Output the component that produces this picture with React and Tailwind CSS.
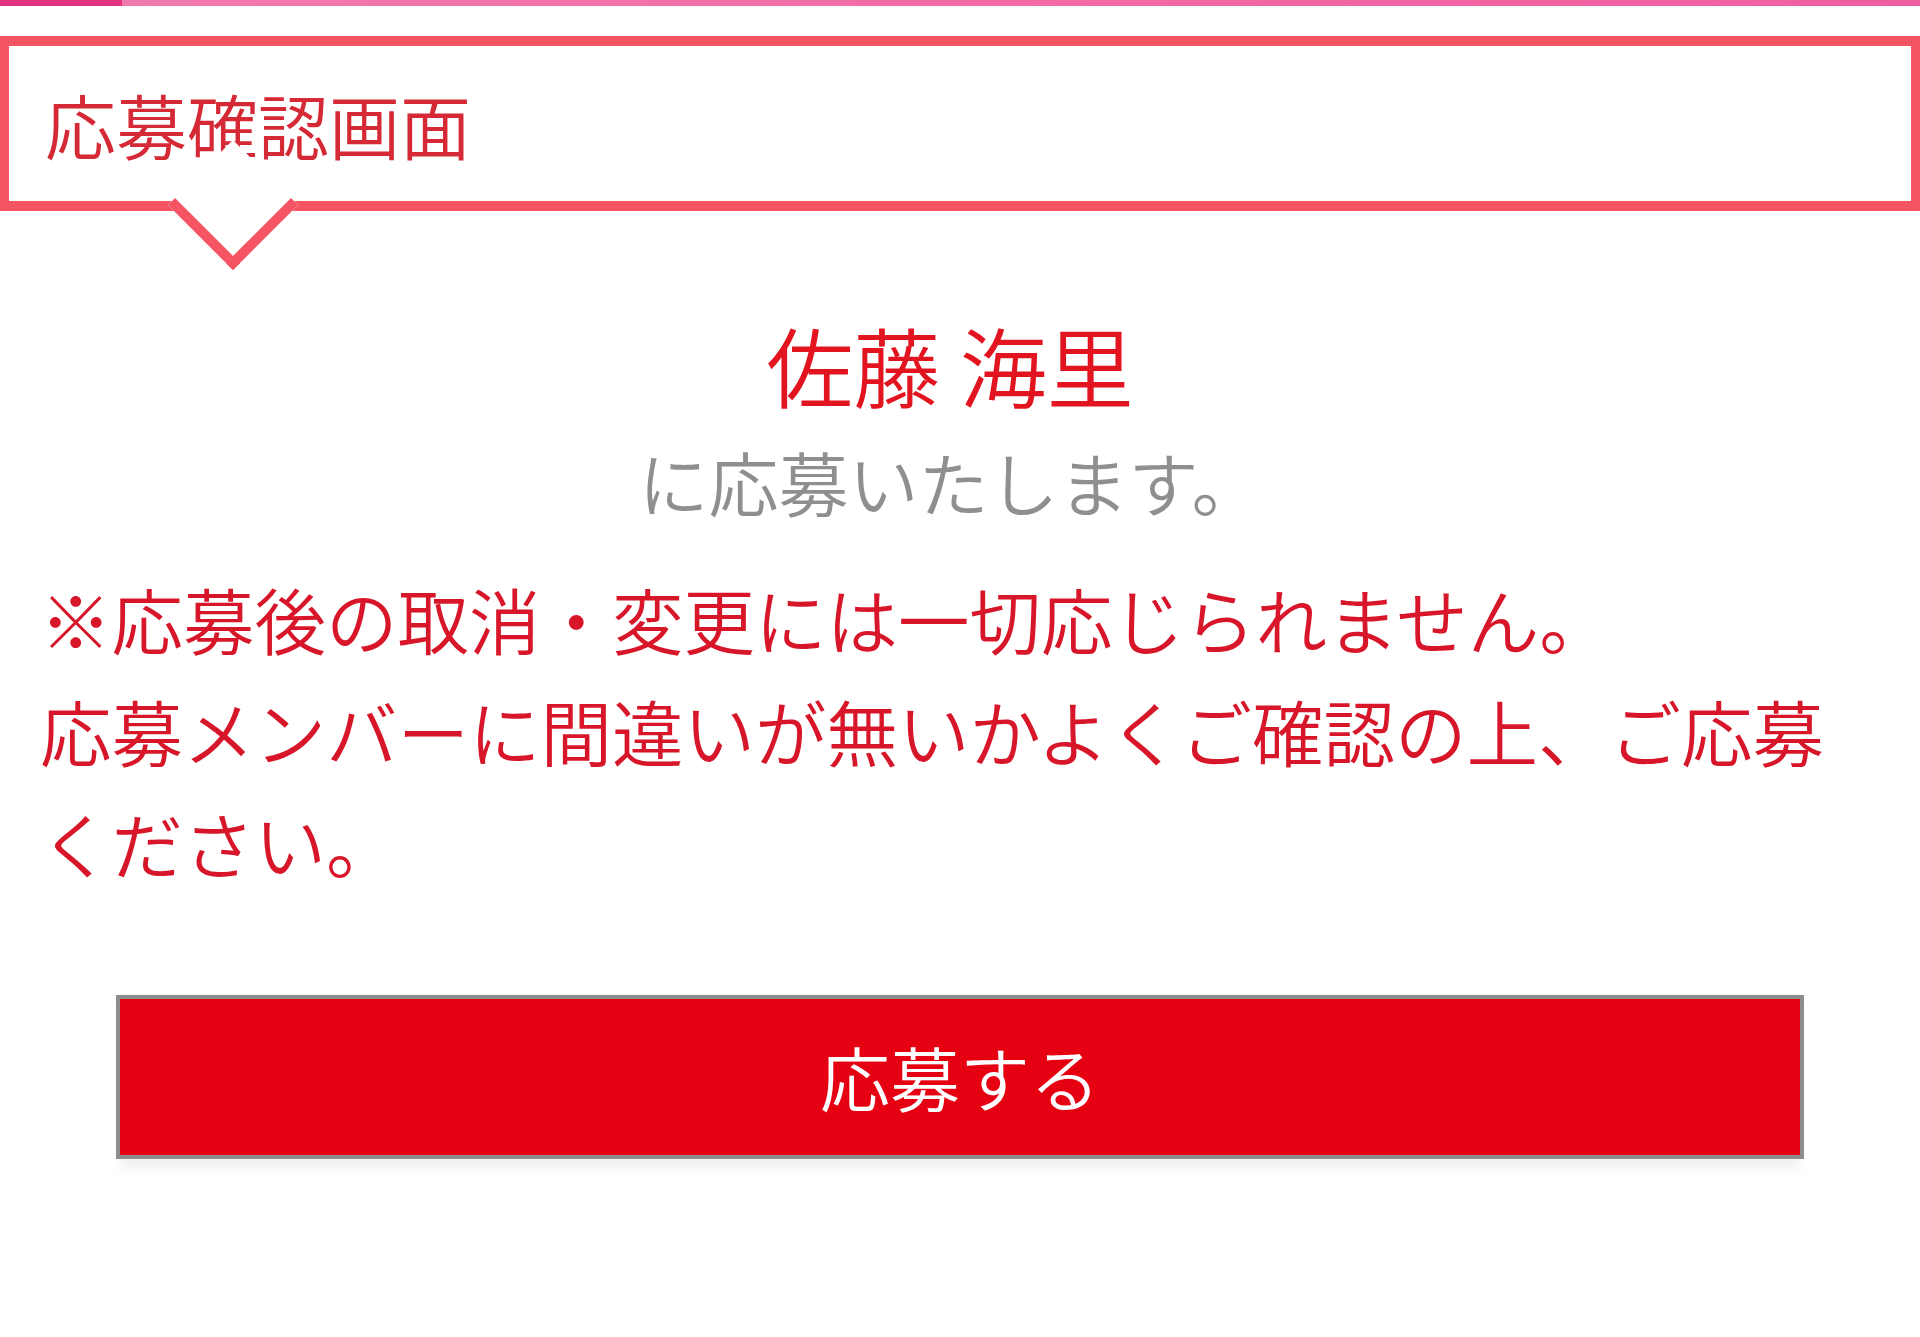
import React from 'react'

const jp = { fontFamily: '"Noto Sans CJK JP", "Noto Sans", sans-serif' }

const App = () => {
  return (
    <div className="min-h-[1337px] w-full bg-white font-[350]" style={jp}>
      {/* cut-off header strip */}
      <div className="flex h-[6px] w-full">
        <div className="h-full w-[122px] bg-[#e3327e]" />
        <div className="h-full flex-1 bg-gradient-to-r from-[#f07aae] via-[#f26aa6] to-[#ee5f9f]" />
      </div>

      {/* title bubble */}
      <div className="relative mt-[30px]">
        <div className="relative z-10 flex h-[175px] items-center border-[10px] border-x-[9px] border-[#f55562] bg-white pl-[36px]">
          <h1 className="text-[71px] leading-none text-[#d52a35]">応募確認画面</h1>
        </div>
        <div className="absolute left-[187px] top-[123px] z-20 h-[92px] w-[92px] rotate-45 border-r-[10px] border-b-[10px] border-[#f55562] bg-white" />
      </div>

      <div className="pl-[40px] pr-[60px]">
        <p className="mt-[103px] text-center text-[87px] leading-[100px] text-[#e2141f]">佐藤 海里</p>
        <p className="mt-[28px] text-center text-[70px] leading-[80px] text-[#8f8f8f]">に応募いたします。</p>

        <p className="mt-[40px] text-[71.5px] leading-[112px] text-[#d8162a]">
          ※応募後の取消・変更には一切応じられません。
          <br />
          応募メンバーに間違いが無いかよくご確認の上、ご応募ください。
        </p>
      </div>

      <div className="mx-[116px] mt-[97px]">
        <button className="flex h-[164px] w-full items-center justify-center border-[4px] border-[#8d8d8d] bg-[#e50012] text-[70px] leading-none text-white shadow-[0_14px_10px_-4px_rgba(0,0,0,0.06)]">
          応募する
        </button>
      </div>
    </div>
  )
}

export default App
